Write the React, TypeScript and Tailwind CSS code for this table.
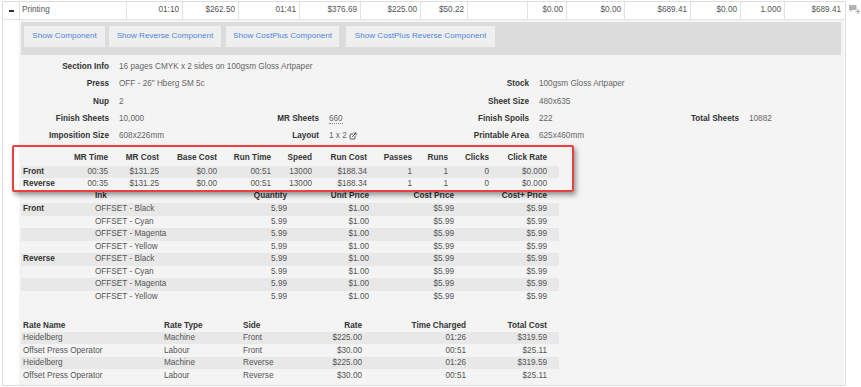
import { ExternalLink } from "lucide-react";

const topCols = [
  { w: "w-[107px]", v: "Printing", left: true },
  { w: "w-[56px]", v: "01:10" },
  { w: "w-[56px]", v: "$262.50" },
  { w: "w-[61px]", v: "01:41" },
  { w: "w-[61px]", v: "$376.69" },
  { w: "w-[60px]", v: "$225.00" },
  { w: "w-[47px]", v: "$50.22" },
  { w: "w-[60px]", v: "" },
  { w: "w-[39px]", v: "$0.00" },
  { w: "w-[58px]", v: "$0.00" },
  { w: "w-[66px]", v: "$689.41" },
  { w: "w-[50px]", v: "$0.00" },
  { w: "w-[44px]", v: "1.000" },
  { w: "w-[60px]", v: "$689.41" },
];

const buttons = [
  { label: "Show Component", w: "w-[81px]", ml: "ml-0" },
  { label: "Show Reverse Component", w: "w-[112px]", ml: "ml-[4px]" },
  { label: "Show CostPlus Component", w: "w-[113px]", ml: "ml-[5px]" },
  { label: "Show CostPlus Reverse Component", w: "w-[149px]", ml: "ml-[7px]" },
];

type Pair = { label: string; value: React.ReactNode } | null;

const infoRows: Pair[][] = [
  [{ label: "Section Info", value: "16 pages CMYK x 2 sides on 100gsm Gloss Artpaper" }],
  [{ label: "Press", value: "OFF - 26\" Hberg SM 5c" }, null, { label: "Stock", value: "100gsm Gloss Artpaper" }],
  [{ label: "Nup", value: "2" }, null, { label: "Sheet Size", value: "480x635" }],
  [
    { label: "Finish Sheets", value: "10,000" },
    {
      label: "MR Sheets",
      value: <span className="border-b border-dotted border-[#888] leading-[9px]">660</span>,
    },
    { label: "Finish Spoils", value: "222" },
    { label: "Total Sheets", value: "10882" },
  ],
  [
    { label: "Imposition Size", value: "608x226mm" },
    {
      label: "Layout",
      value: (
        <span className="flex items-center gap-[2px]">
          1 x 2 <ExternalLink size={8} strokeWidth={2.6} className="text-[#444]" />
        </span>
      ),
    },
    { label: "Printable Area", value: "625x460mm" },
  ],
];

const mrGrid = "grid grid-cols-[38px_52px_51px_58px_54px_41px_55px_45px_36px_41px_58px_9px]";
const mrHead = ["", "MR Time", "MR Cost", "Base Cost", "Run Time", "Speed", "Run Cost", "Passes", "Runs", "Clicks", "Click Rate"];
const mrRows = [
  ["Front", "00:35", "$131.25", "$0.00", "00:51", "13000", "$188.34", "1", "1", "0", "$0.000"],
  ["Reverse", "00:35", "$131.25", "$0.00", "00:51", "13000", "$188.34", "1", "1", "0", "$0.000"],
];

const inkGrid = "grid grid-cols-[72px_106px_91px_82px_85px_93px_9px]";
const inks = ["Black", "Cyan", "Magenta", "Yellow"];
const inkRows = ["Front", "Reverse"].flatMap((side) =>
  inks.map((c, i) => [i === 0 ? side : "", `OFFSET - ${c}`, "5.99", "$1.00", "$5.99", "$5.99"])
);

const rateGrid = "grid grid-cols-[141px_79px_58px_66px_104px_81px_9px]";
const rateRows = [
  ["Heidelberg", "Machine", "Front", "$225.00", "01:26", "$319.59"],
  ["Offset Press Operator", "Labour", "Front", "$30.00", "00:51", "$25.11"],
  ["Heidelberg", "Machine", "Reverse", "$225.00", "01:26", "$319.59"],
  ["Offset Press Operator", "Labour", "Reverse", "$30.00", "00:51", "$25.11"],
];

function Cell({ v, left, bold }: { v: string; left?: boolean; bold?: boolean }) {
  return (
    <div
      className={`flex items-center whitespace-nowrap ${left ? "pl-[2px]" : "justify-end pr-[3px]"} ${
        bold ? "font-bold text-[#333]" : ""
      }`}
    >
      {v}
    </div>
  );
}

function CommentPlus() {
  return (
    <svg width="11" height="9" viewBox="0 0 11 9" fill="#b3b3b3">
      <path d="M0 0h7.5v5H3.2L1.2 7V5H0z" />
      <rect x="8.3" y="4" width="1.2" height="5" />
      <rect x="6.4" y="5.9" width="5" height="1.2" />
    </svg>
  );
}

export default function App() {
  return (
    <div className="relative h-[387px] w-[861px] overflow-hidden bg-white font-['Liberation_Sans',Arial,sans-serif] text-[8.2px] text-[#555]">
      <div className="flex items-start">
        <div className="ml-[2px] mt-[1px] w-[844px] border-x border-t border-b border-[#dddddd]">
          {/* summary row */}
          <div className="flex h-[18px] border-b border-[#e3e3e3]">
            <div className="flex w-[16px] items-center justify-center">
              <div className="h-[2px] w-[5px] bg-[#333]" />
            </div>
            {topCols.map((c, i) => (
              <div
                key={i}
                className={`${c.w} flex items-center border-l border-[#e3e3e3] whitespace-nowrap ${
                  c.left ? "pl-[2px]" : "justify-end pr-[3px]"
                }`}
              >
                {c.v}
              </div>
            ))}
          </div>

          {/* expanded detail */}
          <div className="flex h-[365px]">
            <div className="w-[16px]" />
            <div className="w-[825px] bg-[#f4f4f4] pl-[2px] pr-[3px] pt-[2px]">
              <div className="flex h-[33px] items-start bg-[#dcdcdc] pl-[3px] pt-[4px]">
                {buttons.map((b) => (
                  <div
                    key={b.label}
                    className={`${b.w} ${b.ml} flex h-[21px] items-center justify-center bg-[#efefef] text-[8.1px] text-[#4d86da]`}
                  >
                    {b.label}
                  </div>
                ))}
              </div>

              <div className="mt-[3.5px]">
                {infoRows.map((row, ri) => (
                  <div key={ri} className="flex h-[17.3px] items-center">
                    {row.map((p, pi) => (
                      <div key={pi} className="flex w-[210px] shrink-0 items-center">
                        {p && (
                          <>
                            <div className="w-[88px] shrink-0 text-right font-bold text-[#333] whitespace-nowrap">
                              {p.label}
                            </div>
                            <div className="pl-[10px] whitespace-nowrap text-[#666]">{p.value}</div>
                          </>
                        )}
                      </div>
                    ))}
                  </div>
                ))}
              </div>

              <div className="mt-[6px] w-[538px]">
                <div className={`${mrGrid} h-[15px]`}>
                  {mrHead.map((h, i) => (
                    <Cell key={i} v={h} bold />
                  ))}
                </div>
                {mrRows.map((r, ri) => (
                  <div key={ri} className={`${mrGrid} h-[12px] ${ri % 2 === 0 ? "bg-[#e8e8e8]" : ""}`}>
                    {r.map((v, i) => (
                      <Cell key={i} v={v} left={i === 0} bold={i === 0} />
                    ))}
                  </div>
                ))}

                <div className={`${inkGrid} h-[13px]`}>
                  <Cell v="" left />
                  <Cell v="Ink" left bold />
                  <Cell v="Quantity" bold />
                  <Cell v="Unit Price" bold />
                  <Cell v="Cost Price" bold />
                  <Cell v="Cost+ Price" bold />
                </div>
                {inkRows.map((r, ri) => (
                  <div key={ri} className={`${inkGrid} h-[12.57px] ${ri % 2 === 0 ? "bg-[#e8e8e8]" : ""}`}>
                    {r.map((v, i) => (
                      <Cell key={i} v={v} left={i < 2} bold={i === 0} />
                    ))}
                  </div>
                ))}

                <div className={`${rateGrid} mt-[16px] h-[12.5px]`}>
                  <Cell v="Rate Name" left bold />
                  <Cell v="Rate Type" left bold />
                  <Cell v="Side" left bold />
                  <Cell v="Rate" bold />
                  <Cell v="Time Charged" bold />
                  <Cell v="Total Cost" bold />
                </div>
                {rateRows.map((r, ri) => (
                  <div key={ri} className={`${rateGrid} h-[12.5px] ${ri % 2 === 0 ? "bg-[#e8e8e8]" : ""}`}>
                    {r.map((v, i) => (
                      <Cell key={i} v={v} left={i < 3} />
                    ))}
                  </div>
                ))}
              </div>
            </div>
          </div>
        </div>
        <div className="ml-[3px] mt-[5px]">
          <CommentPlus />
        </div>
      </div>

      {/* annotation highlight */}
      <div className="absolute left-[12px] top-[145px] h-[47px] w-[562px] rounded-[2px] border-[2.5px] border-[#e8413f] shadow-[2px_3px_5px_rgba(0,0,0,0.4)]" />
    </div>
  );
}
